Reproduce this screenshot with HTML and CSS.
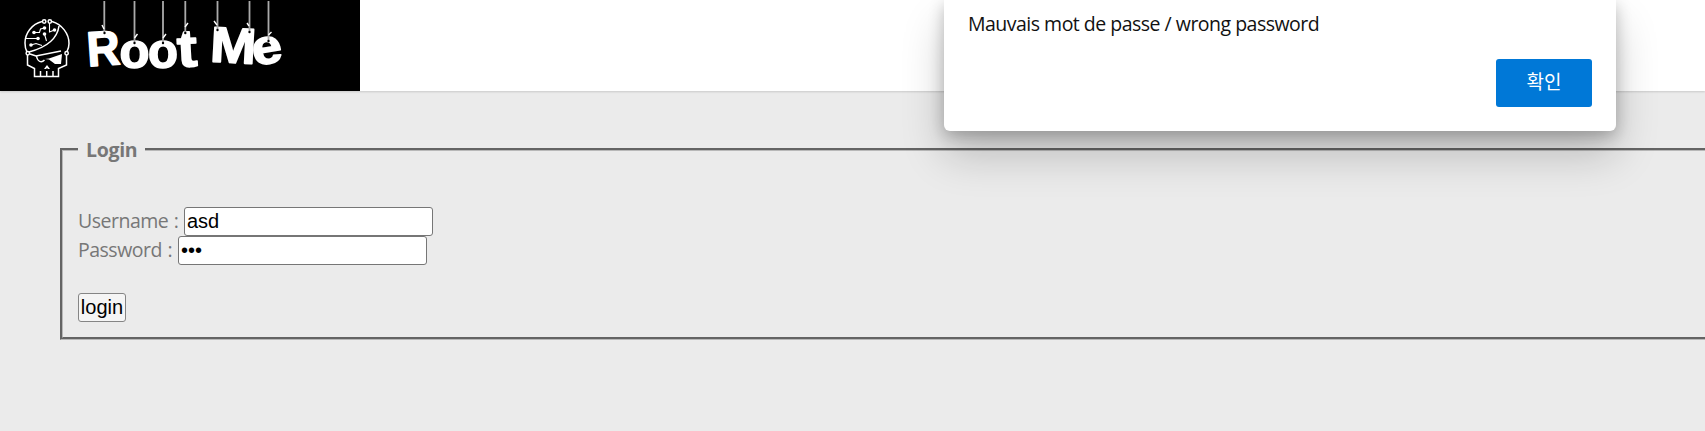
FILE: index.html
```html
<!DOCTYPE html>
<html lang="fr">
<head>
<meta charset="utf-8">
<title>Root Me</title>
<link rel="stylesheet" href="styles.css">
</head>
<body>
<header class="header">
  <div class="brand">
    <svg class="logo" width="360" height="91" viewBox="0 0 360 91">
      <g fill="none" stroke="#fff" stroke-width="1.500">
        <path d="M42 21.500C32 24 25 33 25 43c0 4 .8 7 2 9M52 21.500c10 3 17 12 17 22 0 3-1 6-2 8"/>
        <circle cx="44.200" cy="21.500" r="1.700"/><circle cx="49.800" cy="21.500" r="1.700"/>
        <circle cx="27.800" cy="53.200" r="1.700"/><circle cx="66.600" cy="53.200" r="1.700"/>
        <path d="M27.500 55v10l7 3.500v8h24v-8l8-3.500V55M40.500 76v-5M46.700 76v-5M53 76v-5"/>
        <path d="M29 52C44 48 57 41 59 26M30 54l6 2L61 51"/>
        <path d="M36.500 56c1 6 5 7 8 4"/>
      </g>
      <g fill="none" stroke="#fff" stroke-width="1.100">
        <path d="M49.500 23v9l5-2M44.500 28l-4 1-1 3.500h-5M26 38.500h12M44.500 34l2 7M31 45l5-1.500 6 2"/>
      </g>
      <g fill="#fff">
        <circle cx="44.500" cy="28" r="1.800"/><circle cx="34" cy="32.500" r="1.800"/><circle cx="38" cy="38.500" r="1.800"/><circle cx="44.500" cy="34" r="1.800"/><circle cx="31" cy="45" r="1.800"/><circle cx="54.500" cy="30" r="1.800"/>
        <path d="M45 59l4-.5 13-4.500-1 10h-6l-6-4.500z"/>
        <path d="M47 65l3 4h-2l-1-1-1 1h-2z"/>
      </g>
      <g class="letters">
        <text transform="translate(88 66.500) rotate(-4)" font-size="49" textLength="33" lengthAdjust="spacingAndGlyphs">R</text>
        <text x="119.500" y="67.800" font-size="50" textLength="30" lengthAdjust="spacingAndGlyphs">o</text>
        <text x="148" y="67.800" font-size="50" textLength="30" lengthAdjust="spacingAndGlyphs">o</text>
        <text transform="translate(178 67) rotate(-3)" font-size="53" textLength="20" lengthAdjust="spacingAndGlyphs">t</text>
        <text transform="translate(209.500 61.500) rotate(3)" font-size="50" textLength="46" lengthAdjust="spacingAndGlyphs">M</text>
        <text transform="translate(254.500 66) rotate(-10)" font-size="49" textLength="30" lengthAdjust="spacingAndGlyphs">e</text>
      </g>
      <g stroke="#aaa" stroke-width="1.800">
        <path d="M104.300 1v31M134.500 1v41M163 1v41M185.300 1v31M217.500 1v28M249.500 1v30M268.500 1v39"/>
      </g>
      <g fill="none" stroke="#fff" stroke-width="1.400">
        <path d="M104 29l-2-4M134.500 38l3-4M163 38l3-4M185 27l3-4M217 25l-3-4M249 26l-2-3M268.500 35l3-3"/>
      </g>
      <g fill="#000">
        <circle cx="104.500" cy="33" r="1.200"/><circle cx="134.500" cy="43" r="1.200"/><circle cx="163" cy="43" r="1.200"/><circle cx="185.300" cy="33" r="1.200"/><circle cx="217.500" cy="30" r="1.200"/><circle cx="249.500" cy="32" r="1.200"/><circle cx="268.500" cy="41" r="1.200"/>
      </g>
    </svg>
  </div>
</header>
<main class="content">
  <fieldset class="login">
    <legend class="title"><span class="title-text">Login</span></legend>
    <form class="form">
      <div class="row"><label class="label label-user" for="user">Username <span class="colon">:</span></label><input class="field" id="user" type="text" value="asd"></div>
      <div class="row"><label class="label label-pass" for="pass">Password <span class="colon">:</span></label><input class="field" id="pass" type="password" value="asd"></div>
      <button class="submit" type="button">login</button>
    </form>
  </fieldset>
</main>
<div class="dialog" role="alertdialog">
  <p class="message">Mauvais mot de passe / wrong password</p>
  <button class="confirm" type="button">확인</button>
</div>
</body>
</html>
```
FILE: styles.css
```css
* { box-sizing: border-box; }
body {
  margin: 0;
  height: 431px;
  overflow: hidden;
  background: #ebebeb;
  color: #777;
  font: 19px/29px "Open Sans", "Noto Sans CJK KR", sans-serif;
}
.header {
  height: 91px;
  background: #fff;
  box-shadow: 0 1px 2px rgba(0, 0, 0, .14);
}
.brand { width: 360px; height: 91px; background: #000; }
.logo { display: block; }
.letters {
  fill: #fff;
  stroke: #fff;
  stroke-width: 1.6px;
  stroke-linejoin: round;
  font-family: "Liberation Sans", Arial, sans-serif;
  font-weight: 700;
}
.content { padding: 44px 0 0 60px; }
.login {
  width: 1700px;
  height: 205px;
  margin: 0;
  padding: 0 15px;
  border: 3px groove #b8b8b8;
}
.title {
  height: 29px;
  padding: 0 8px;
  font-weight: 700;
  font-size: 19.5px;
}
.title-text { display: block; width: 51px; letter-spacing: -.3px; white-space: nowrap; }
.form { padding-top: 43px; }
.row { display: flex; height: 29px; }
.label { flex: none; white-space: nowrap; font-size: 19.5px; line-height: 27px; letter-spacing: -.5px; }
.colon { margin-left: 1px; }
.label-user { width: 106px; }
.label-pass { width: 100px; }
.field {
  width: 249px;
  height: 29px;
  padding: 0 2px;
  border: 1px solid #767676;
  border-radius: 3px;
  background: #fff;
  color: #000;
  font: 20px "Liberation Sans", Arial, sans-serif;
}
.submit {
  display: block;
  width: 48px;
  height: 29px;
  margin-top: 28px;
  padding: 0;
  border: 1px solid #858585;
  border-radius: 3px;
  background: #f5f5f5;
  color: #000;
  font: 20px "Liberation Sans", Arial, sans-serif;
}
.dialog {
  position: absolute;
  top: 0;
  left: 944px;
  display: flex;
  flex-direction: column;
  width: 672px;
  height: 131px;
  padding: 9px 24px 24px;
  border-radius: 0 0 6px 6px;
  background: #fff;
  box-shadow: 0 24px 44px rgba(0, 0, 0, .2), 0 5px 16px rgba(0, 0, 0, .24);
}
.message { margin: 0; color: #111; font-size: 19.5px; letter-spacing: -.51px; white-space: nowrap; }
.confirm {
  align-self: flex-end;
  width: 96px;
  height: 48px;
  margin-top: auto;
  padding: 0 0 5px;
  border: 0;
  border-radius: 3px;
  background: #0078d7;
  color: #fff;
  font: 19px "Noto Sans CJK KR", sans-serif;
}
```
